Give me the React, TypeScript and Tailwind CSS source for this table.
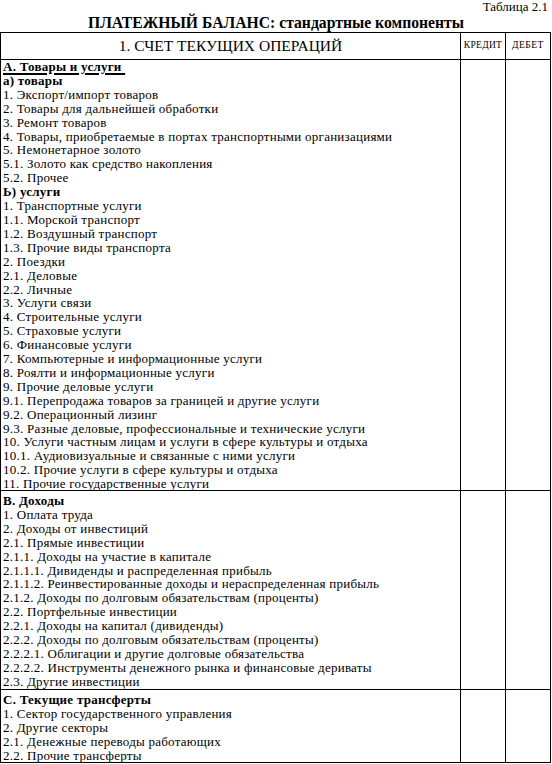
const sectionA: { text: string; bold?: boolean; underline?: boolean }[] = [
  { text: "А. Товары и услуги\u00a0", bold: true, underline: true },
  { text: "а) товары", bold: true },
  { text: "1. Экспорт/импорт товаров" },
  { text: "2. Товары для дальнейшей обработки" },
  { text: "3. Ремонт товаров" },
  { text: "4. Товары, приобретаемые в портах транспортными организациями" },
  { text: "5. Немонетарное золото" },
  { text: "5.1. Золото как средство накопления" },
  { text: "5.2. Прочее" },
  { text: "Ь) услуги", bold: true },
  { text: "1. Транспортные услуги" },
  { text: "1.1. Морской транспорт" },
  { text: "1.2. Воздушный транспорт" },
  { text: "1.3. Прочие виды транспорта" },
  { text: "2. Поездки" },
  { text: "2.1. Деловые" },
  { text: "2.2. Личные" },
  { text: "3. Услуги связи" },
  { text: "4. Строительные услуги" },
  { text: "5. Страховые услуги" },
  { text: "6. Финансовые услуги" },
  { text: "7. Компьютерные и информационные услуги" },
  { text: "8. Роялти и информационные услуги" },
  { text: "9. Прочие деловые услуги" },
  { text: "9.1. Перепродажа товаров за границей и другие услуги" },
  { text: "9.2. Операционный лизинг" },
  { text: "9.3. Разные деловые, профессиональные и технические услуги" },
  { text: "10. Услуги частным лицам и услуги в сфере культуры и отдыха" },
  { text: "10.1. Аудиовизуальные и связанные с ними услуги" },
  { text: "10.2. Прочие услуги в сфере культуры и отдыха" },
  { text: "11. Прочие государственные услуги" },
];

const sectionB = [
  { text: "В. Доходы", bold: true },
  { text: "1. Оплата труда" },
  { text: "2. Доходы от инвестиций" },
  { text: "2.1. Прямые инвестиции" },
  { text: "2.1.1. Доходы на участие в капитале" },
  { text: "2.1.1.1. Дивиденды и распределенная прибыль" },
  { text: "2.1.1.2. Реинвестированные доходы и нераспределенная прибыль" },
  { text: "2.1.2. Доходы по долговым обязательствам (проценты)" },
  { text: "2.2. Портфельные инвестиции" },
  { text: "2.2.1. Доходы на капитал (дивиденды)" },
  { text: "2.2.2. Доходы по долговым обязательствам (проценты)" },
  { text: "2.2.2.1. Облигации и другие долговые обязательства" },
  { text: "2.2.2.2. Инструменты денежного рынка и финансовые дериваты" },
  { text: "2.3. Другие инвестиции" },
];

const sectionC = [
  { text: "С. Текущие трансферты", bold: true },
  { text: "1. Сектор государственного управления" },
  { text: "2. Другие секторы" },
  { text: "2.1. Денежные переводы работающих" },
  { text: "2.2. Прочие трансферты" },
];

type Line = { text: string; bold?: boolean; underline?: boolean };

function Lines({ lines }: { lines: Line[] }) {
  return (
    <>
      {lines.map((l) => (
        <div
          key={l.text}
          className={`whitespace-nowrap text-[13px] leading-[13.9px] tracking-[0.25px] ${
            l.bold ? "font-bold" : ""
          } ${l.underline ? "underline decoration-[1.5px] underline-offset-[2px]" : ""}`}
        >
          {l.text}
        </div>
      ))}
    </>
  );
}

function Section({ lines, height, pad }: { lines: Line[]; height: string; pad: string }) {
  return (
    <>
      <div className={`border-r border-b border-black pl-[2px] ${height} ${pad}`}>
        <Lines lines={lines} />
      </div>
      <div className={`border-r border-b border-black ${height}`} />
      <div className={`border-b border-black ${height}`} />
    </>
  );
}

export default function App() {
  return (
    <div className="h-[764px] w-[552px] overflow-hidden bg-white font-[Liberation_Serif] text-black">
      <div className="pr-[4px] text-right text-[13px] leading-[14px]">Таблица 2.1</div>
      <h1 className="text-center text-[15.7px] font-bold leading-[18px]">
        ПЛАТЕЖНЫЙ БАЛАНС: стандартные компоненты
      </h1>

      <div className="grid w-[551px] grid-cols-[460px_45px_44px] border border-black">
        <div className="flex h-[27px] items-center justify-center border-r border-b border-black text-[15.5px] leading-none">
          1. СЧЕТ ТЕКУЩИХ ОПЕРАЦИЙ
        </div>
        <div className="flex h-[27px] items-center justify-center border-r border-b border-black text-[9.5px] leading-none tracking-[0.3px]">
          КРЕДИТ
        </div>
        <div className="flex h-[27px] items-center justify-center border-b border-black text-[9.5px] leading-none tracking-[0.5px]">
          ДЕБЕТ
        </div>

        <Section lines={sectionA} height="h-[431px]" pad="pt-0" />
        <Section lines={sectionB} height="h-[199px]" pad="pt-[3px]" />
        <div className="h-[72px] border-r border-black pl-[2px] pt-[3px]">
          <Lines lines={sectionC} />
        </div>
        <div className="h-[72px] border-r border-black" />
        <div className="h-[72px]" />
      </div>
    </div>
  );
}
